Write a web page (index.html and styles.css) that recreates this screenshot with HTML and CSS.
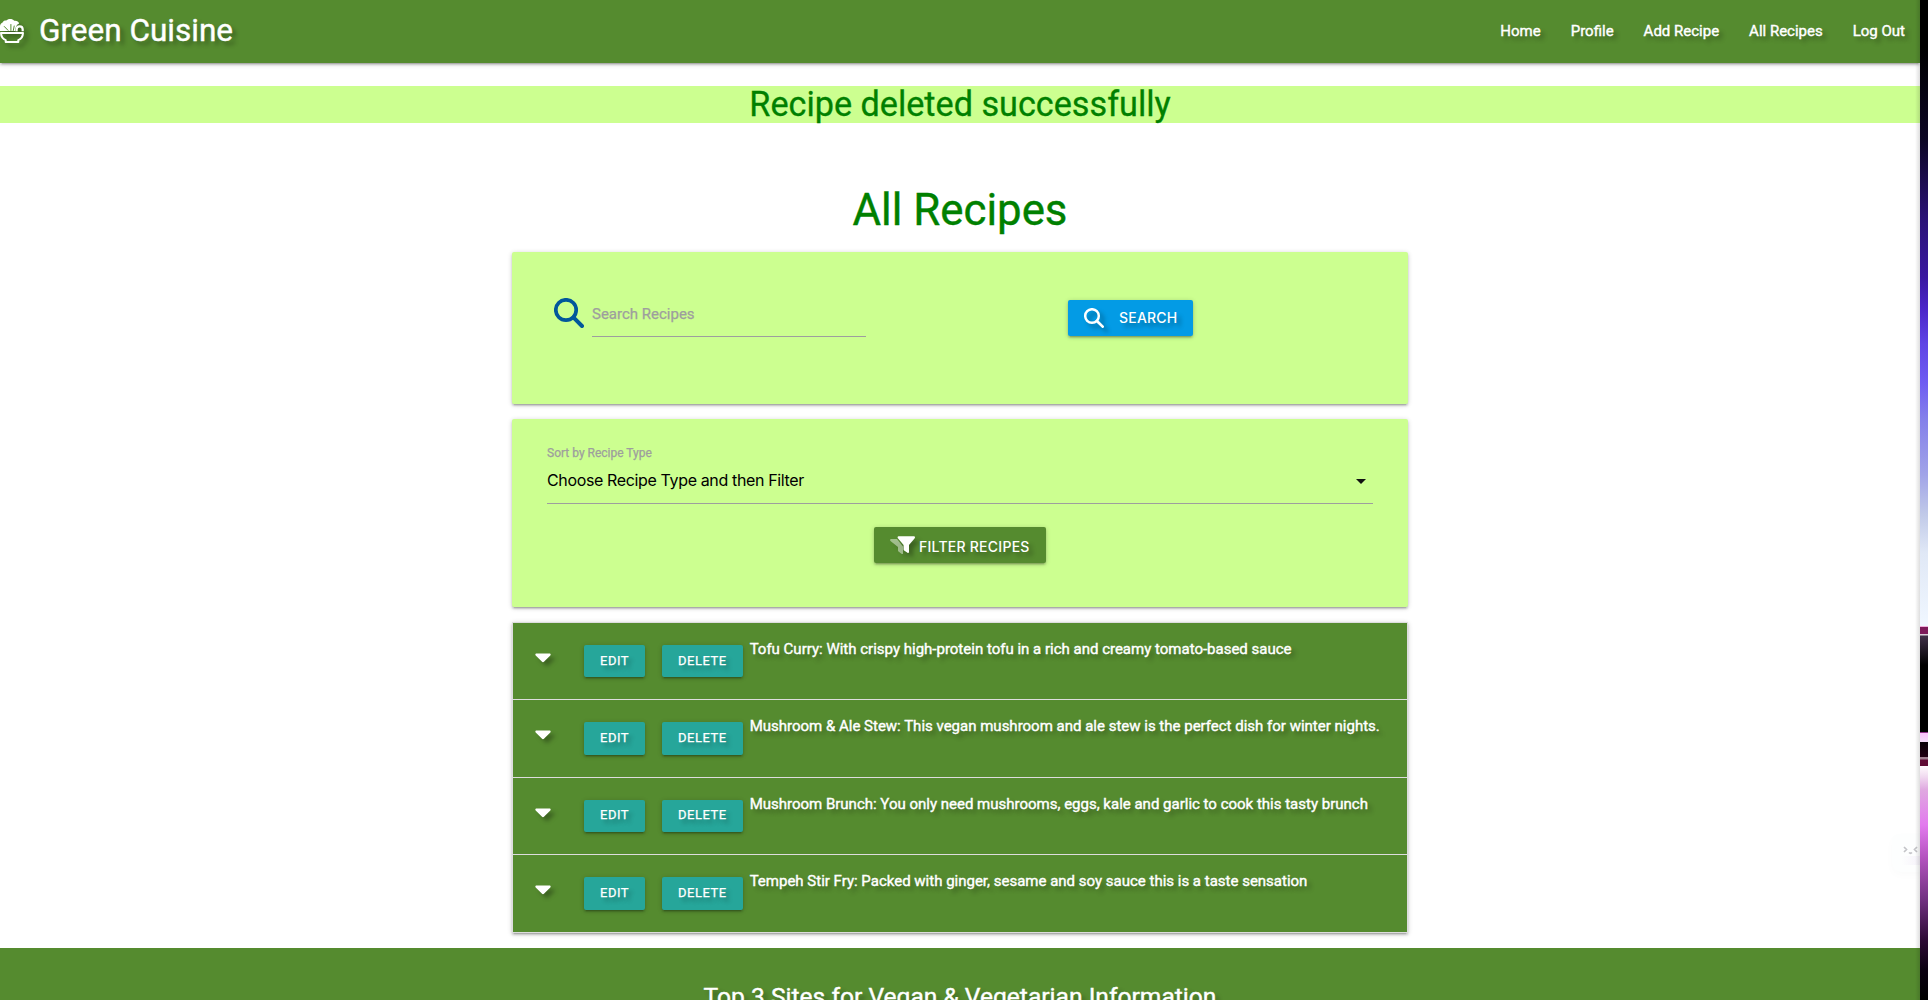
FILE: index.html
```
<!DOCTYPE html>
<html lang="en">
<head>
<meta charset="utf-8">
<title>Green Cuisine</title>
<link rel="stylesheet" href="styles.css">
</head>
<body>
<svg width="0" height="0" class="defs">
  <symbol id="magnifier" viewBox="0 0 30 30"><circle cx="12" cy="12" r="10.2" fill="none" stroke="currentColor" stroke-width="3.7"/><path d="M19.4 19.4 28 28" stroke="currentColor" stroke-width="4" stroke-linecap="round"/></symbol>
  <symbol id="caret" viewBox="0 0 16 10"><path d="M1.6.4h12.8c1.2 0 1.7 1.2.9 2L9.2 8.6c-.7.7-1.7.7-2.4 0L.7 2.4C-.1 1.600.4.4 1.6.4z" fill="currentColor"/></symbol>
</svg>
<div class="page">
  <header class="navbar">
    <a class="brand">
      <svg class="brand-icon" width="24" height="24" viewBox="0 0 24 24" fill="none" stroke="#fff">
        <path fill="#fff" stroke="none" d="M0 12V9.500C-.5 7 .3 4.200 2.600 3.400 3.500 1.800 5 1.300 6.300 1.600 7.800-.5 12.700-.5 14.200 1.800c2.200-.5 4.400.6 4.900 2.600C16.500 5.500 15.300 8 15.200 12z"/>
        <path stroke="#558b2f" stroke-width="1" stroke-linecap="round" d="M4.300 7.500 8 11.300M10.900 5.500v6M14.200 7 13.300 11.500"/>
        <path stroke-width="2.200" d="M16.600 12.200V10.600C16.600 6.400 22.700 6.400 22.700 10.600V12.200"/>
        <path stroke-width="2" stroke-linejoin="round" d="M1 14H23C22.800 18 20.800 20.200 18.300 21.100V22.900H5.700V21.100C3.200 20.200 1.200 18 1 14z"/>
      </svg>
      <span>Green Cuisine</span>
    </a>
    <nav class="links"><a>Home</a><a>Profile</a><a>Add Recipe</a><a>All Recipes</a><a>Log Out</a></nav>
  </header>

  <h4 class="flash">Recipe deleted successfully</h4>

  <main class="content">
    <h3 class="title">All Recipes</h3>

    <section class="card search-card">
      <svg class="search-icon" width="30" height="30"><use href="#magnifier"/></svg>
      <div class="field">Search Recipes</div>
      <a class="btn btn-search"><svg class="shadowed" width="20" height="20"><use href="#magnifier"/></svg><span>SEARCH</span></a>
    </section>

    <section class="card filter-card">
      <label class="label">Sort by Recipe Type</label>
      <div class="select"><span>Choose Recipe Type and then Filter</span><i class="arrow"></i></div>
      <a class="btn btn-filter">
        <svg class="shadowed" width="25" height="18" viewBox="0 0 25 18"><path fill="#fff" opacity=".45" d="M1.200 3H7L13 10.500V17.500c0 .6-.8.8-1.200.4L8.500 15.500C8.200 15.200 8 15 8 14.600V11L.5 5C-.3 4.200.2 3 1.200 3z"/><path fill="#fff" d="M8.600.3H24c1 0 1.400 1.200.7 2L19 9V16c0 .8-.9 1.200-1.500.7L14.100 14.500c-.3-.3-.5-.6-.5-1V9L7.900 2.300C7.200 1.500 7.600.3 8.600.3z"/></svg>
        <span>FILTER RECIPES</span>
      </a>
    </section>

    <ul class="recipes">
      <li class="recipe"><svg class="caret shadowed" width="16" height="10"><use href="#caret"/></svg><a class="btn small">EDIT</a><a class="btn small">DELETE</a><span class="summary">Tofu Curry: With crispy high-protein tofu in a rich and creamy tomato-based sauce</span></li>
      <li class="recipe"><svg class="caret shadowed" width="16" height="10"><use href="#caret"/></svg><a class="btn small">EDIT</a><a class="btn small">DELETE</a><span class="summary">Mushroom &amp; Ale Stew: This vegan mushroom and ale stew is the perfect dish for winter nights.</span></li>
      <li class="recipe"><svg class="caret shadowed" width="16" height="10"><use href="#caret"/></svg><a class="btn small">EDIT</a><a class="btn small">DELETE</a><span class="summary">Mushroom Brunch: You only need mushrooms, eggs, kale and garlic to cook this tasty brunch</span></li>
      <li class="recipe"><svg class="caret shadowed" width="16" height="10"><use href="#caret"/></svg><a class="btn small">EDIT</a><a class="btn small">DELETE</a><span class="summary">Tempeh Stir Fry: Packed with ginger, sesame and soy sauce this is a taste sensation</span></li>
    </ul>
  </main>

  <footer class="footer"><h5>Top 3 Sites for Vegan &amp; Vegetarian Information</h5></footer>

  <div class="helper"><svg width="15" height="9" viewBox="0 0 15 9" fill="none" stroke="#c4c4c8" stroke-width="1.700"><path d="M1 1l2.500 2.500L1 6M14 1l-2.500 2.500L14 6M6 6.500q1.500 1.500 3 0"/></svg></div>
</div>
<div class="desktop"></div>
</body>
</html>
```
FILE: styles.css
```
* { box-sizing: border-box; }

body {
  margin: 0;
  display: flex;
  height: 1000px;
  overflow: hidden;
  background: #fff;
  font: 15px/1.5 Roboto, sans-serif;
}

.defs { position: absolute; }

.page {
  position: relative;
  width: 1920px;
  height: 1000px;
  overflow: hidden;
  display: flex;
  flex-direction: column;
}

/* soft shade along the window's right edge */
.page::after {
  content: "";
  position: absolute;
  top: 0;
  right: 0;
  width: 5px;
  height: 100%;
  background: linear-gradient(to right, transparent, rgba(0, 0, 0, .13));
}

h3, h4, h5 { margin: 0; font-weight: 400; line-height: 1.1; }

.navbar {
  display: flex;
  justify-content: space-between;
  height: 63px;
  flex: none;
  background: #558b2f;
  color: #fff;
  box-shadow: 0 2px 2px 0 rgba(0, 0, 0, .14), 0 3px 1px -2px rgba(0, 0, 0, .12), 0 1px 5px 0 rgba(0, 0, 0, .2);
  text-shadow: 4px 4px 4px rgba(0, 0, 0, .3);
}

.brand {
  display: flex;
  gap: 15px;
  font-size: 31.5px;
  line-height: 61px;
  -webkit-text-stroke: .4px #fff;
}

.brand-icon { margin-top: 19px; }

.brand-icon, .shadowed { filter: drop-shadow(4px 4px 2px rgba(0, 0, 0, .3)); overflow: visible; }

.links {
  display: flex;
  gap: 30px;
  padding-right: 15px;
  line-height: 62px;
  -webkit-text-stroke: .4px #fff;
}

.flash {
  flex: none;
  margin-top: 23px;
  height: 37px;
  line-height: 37px;
  font-size: 34.2px;
  text-align: center;
  color: green;
  background: #ccff90;
  -webkit-text-stroke: .3px green;
}

.content { width: 896px; margin: 63px auto 0; }

.title {
  font-size: 43.8px;
  line-height: 48px;
  margin-bottom: 18px;
  text-align: center;
  color: green;
  -webkit-text-stroke: .4px green;
}

.card {
  background: #ccff90;
  border-radius: 2px;
  margin-bottom: 15px;
  box-shadow: 0 2px 2px 0 rgba(0, 0, 0, .14), 0 3px 1px -2px rgba(0, 0, 0, .12), 0 1px 5px 0 rgba(0, 0, 0, .2);
}

.search-card {
  display: flex;
  align-items: flex-start;
  height: 152px;
  padding: 45px 0 0 42px;
}

.search-icon { color: #01579b; margin: 1px 8px 0 0; }

.field {
  width: 274px;
  height: 40px;
  border-bottom: 1px solid #9e9e9e;
  color: #9e9e9e;
  line-height: 34px;
  -webkit-text-stroke: .25px #9e9e9e;
}

.btn {
  display: flex;
  align-items: center;
  border-radius: 2px;
  color: #fff;
  text-shadow: 4px 4px 4px rgba(0, 0, 0, .3);
  box-shadow: 0 2px 2px 0 rgba(0, 0, 0, .14), 0 3px 1px -2px rgba(0, 0, 0, .12), 0 1px 5px 0 rgba(0, 0, 0, .2);
}

.btn-search {
  width: 125px;
  height: 36px;
  margin: 3px 0 0 202px;
  padding-left: 16px;
  gap: 15px;
  background: #039be5;
  font: 500 14px/36px Inter, sans-serif;
  letter-spacing: .22px;
}

.filter-card {
  height: 188px;
  padding: 25px 35px 0;
  margin-bottom: 15px;
}

.label { display: block; font-size: 12px; line-height: 18px; color: #9e9e9e; -webkit-text-stroke: .25px #9e9e9e; }

.select {
  display: flex;
  justify-content: space-between;
  height: 42px;
  padding-right: 7px;
  border-bottom: 1px solid #9e9e9e;
  color: #000;
  font: 16px/37px Inter, sans-serif;
  letter-spacing: -.36px;
}

.arrow {
  margin-top: 17px;
  height: 0;
  border: 5px solid transparent;
  border-top-color: #111;
  border-bottom: 0;
}

.btn-filter {
  width: 172px;
  height: 36px;
  margin: 23px auto 0;
  padding-left: 16px;
  gap: 4px;
  background: #558b2f;
  font: 500 14px/36px Inter, sans-serif;
  letter-spacing: .25px;
}

.btn-filter svg { margin-top: -1px; }

.btn-filter span { padding-top: 3px; }

.recipes {
  list-style: none;
  margin: 0;
  padding: 0;
  background: #558b2f;
  border: 1px solid #ddd;
  border-bottom: 0;
  box-shadow: 0 2px 2px 0 rgba(0, 0, 0, .14), 0 3px 1px -2px rgba(0, 0, 0, .12), 0 1px 5px 0 rgba(0, 0, 0, .2);
}

.recipe {
  display: flex;
  align-items: flex-start;
  height: 77.4px;
  padding: 22px 0 0 22px;
  border-bottom: 1px solid #ddd;
  color: #fff;
}

.caret { margin: 8px 33px 0 0; }

.small {
  height: 32.4px;
  margin-right: 17px;
  padding: 0 16px 1.500px;
  background: #26a69a;
  font-size: 13px;
  letter-spacing: .5px;
  -webkit-text-stroke: .25px #fff;
}

.small + .small { margin-right: 7px; }

.summary {
  margin-top: -7px;
  text-shadow: 4px 4px 4px rgba(0, 0, 0, .3);
  -webkit-text-stroke: .4px #fff;
}

.footer {
  flex: 1 0 200px;
  margin-top: 15px;
  padding-top: 35px;
  background: #558b2f;
  color: #fff;
  text-align: center;
}

.footer h5 {
  font-size: 24.6px;
  text-shadow: 4px 4px 4px rgba(0, 0, 0, .3);
  -webkit-text-stroke: .4px #fff;
}

/* faded assistant bubble resting over the page edge */
.helper {
  position: absolute;
  left: 1892px;
  top: 834px;
  width: 40px;
  height: 38px;
  padding: 12px 0 0 11px;
  border-radius: 8px;
  background: #fdfefe linear-gradient(to right, transparent 10%, #f1ebf7) 6px 22px / 34px 9px no-repeat;
  box-shadow: 0 3px 10px rgba(0, 0, 0, .02);
}

.helper svg { display: block; }

/* strip of desktop wallpaper beside the window */
.desktop {
  width: 8px;
  background: linear-gradient(#000 0, #000 47px, #0c0624 140px, #2a1275 217px, #3a18a0 277px, #4a25c8 308px, #5f45e5 344px, #6e5cf2 383px, #8480ea 419px, #a0a3e8 474px, #c0c9e8 514px, #e0e8f6 553px, #f0f7ff 626px,
    #f0b0dd 626px, #f0b0dd 627px, #7d1a5a 627px, #7d1a5a 634px, #d9cdd8 634px, #d9cdd8 635px, #403048 636px, #000 665px, #000 732px,
    #90308a 732px, #90308a 733px, #fac0fb 733px, #f3dcf8 742px, #080006 742px, #200012 757px, #a08090 757px, #a08090 759px, #600a35 760px, #600a35 766px,
    #fffafd 766px, #f3e0f2 775px, #dfa8e0 790px, #e27aee 825px, #b050bb 860px, #703080 900px, #2d0a35 940px, #0a0010 970px, #000 1000px);
}
```
